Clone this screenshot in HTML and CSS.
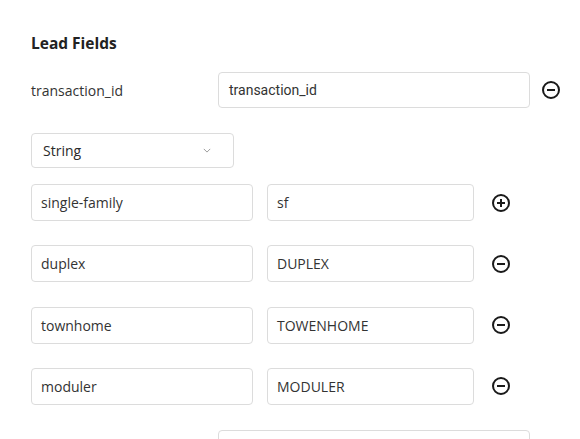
FILE: index.html
```html
<!DOCTYPE html>
<html>
<head>
<meta charset="utf-8">
<link rel="stylesheet" href="styles.css">
</head>
<body>
<div class="panel">
  <h3 class="title">Lead Fields</h3>
  <div class="field-row">
    <label class="field-label">transaction_id</label>
    <div class="input input-roboto">transaction_id</div>
    <span class="icon"><svg viewBox="0 0 20 20" width="20" height="20"><circle cx="10" cy="10" r="8" fill="none" stroke="#1a1a1a" stroke-width="2"/><line x1="6" y1="10" x2="14" y2="10" stroke="#1a1a1a" stroke-width="2"/></svg></span>
  </div>
  <div class="select">
    <span>String</span>
    <svg class="chev" viewBox="0 0 10 6" width="8" height="5"><path d="M1 1 L5 5 L9 1" fill="none" stroke="#999" stroke-width="1.2"/></svg>
  </div>
  <div class="options">
    <div class="opt-row">
      <div class="input">single-family</div>
      <div class="input">sf</div>
      <span class="icon"><svg viewBox="0 0 20 20" width="20" height="20"><circle cx="10" cy="10" r="8" fill="none" stroke="#1a1a1a" stroke-width="2"/><line x1="6" y1="10" x2="14" y2="10" stroke="#1a1a1a" stroke-width="2"/><line x1="10" y1="6" x2="10" y2="14" stroke="#1a1a1a" stroke-width="2"/></svg></span>
    </div>
    <div class="opt-row">
      <div class="input">duplex</div>
      <div class="input">DUPLEX</div>
      <span class="icon"><svg viewBox="0 0 20 20" width="20" height="20"><circle cx="10" cy="10" r="8" fill="none" stroke="#1a1a1a" stroke-width="2"/><line x1="6" y1="10" x2="14" y2="10" stroke="#1a1a1a" stroke-width="2"/></svg></span>
    </div>
    <div class="opt-row">
      <div class="input">townhome</div>
      <div class="input">TOWENHOME</div>
      <span class="icon"><svg viewBox="0 0 20 20" width="20" height="20"><circle cx="10" cy="10" r="8" fill="none" stroke="#1a1a1a" stroke-width="2"/><line x1="6" y1="10" x2="14" y2="10" stroke="#1a1a1a" stroke-width="2"/></svg></span>
    </div>
    <div class="opt-row">
      <div class="input">moduler</div>
      <div class="input">MODULER</div>
      <span class="icon"><svg viewBox="0 0 20 20" width="20" height="20"><circle cx="10" cy="10" r="8" fill="none" stroke="#1a1a1a" stroke-width="2"/><line x1="6" y1="10" x2="14" y2="10" stroke="#1a1a1a" stroke-width="2"/></svg></span>
    </div>
  </div>
  <div class="field-row next-row">
    <label class="field-label"></label>
    <div class="input input-roboto"></div>
    <span class="icon"></span>
  </div>
</div>
</body>
</html>
```
FILE: styles.css
```css
html, body {
  margin: 0;
  padding: 0;
  background: #ffffff;
  overflow: hidden;
  height: 439px;
}
body {
  font-family: "Open Sans", "Noto Sans", sans-serif;
  color: #333333;
  font-size: 14px;
}
.panel {
  padding: 33px 0 0 31px;
  width: 549px;
}
.title {
  margin: 0;
  font-size: 15.5px;
  font-weight: 700;
  line-height: 20px;
  color: #222222;
}
.field-row {
  display: grid;
  grid-template-columns: 187px 312px 20px;
  column-gap: 0;
  align-items: center;
  margin-top: 19px;
}
.field-row .icon {
  margin-left: 11px;
}
.field-label {
  font-size: 14px;
  color: #333333;
}
.input {
  box-sizing: border-box;
  height: 37px;
  border: 1px solid #dcdcdc;
  border-radius: 4px;
  padding: 0 9px;
  display: flex;
  align-items: center;
  font-size: 14px;
  color: #333333;
  background: #fff;
}
.field-row .input {
  height: 36px;
}
.input-roboto {
  font-family: Roboto, "Open Sans", sans-serif;
  padding-left: 10px;
}
.icon {
  display: flex;
  align-items: center;
  justify-content: center;
  width: 20px;
  height: 20px;
}
.select {
  box-sizing: border-box;
  width: 203px;
  height: 35px;
  margin-top: 25px;
  border: 1px solid #dcdcdc;
  border-radius: 4px;
  padding: 0 22px 0 11px;
  display: flex;
  align-items: center;
  justify-content: space-between;
  font-size: 14px;
  font-weight: 500;
  color: #2a2a2a;
}
.chev {
  display: block;
}
.options {
  margin-top: 16px;
  display: flex;
  flex-direction: column;
  gap: 24.3px;
}
.opt-row {
  display: grid;
  grid-template-columns: 222px 207px 20px;
  column-gap: 14px;
  align-items: center;
}
.opt-row .icon {
  margin-left: 3px;
}
.next-row {
  margin-top: 25px;
}
```
